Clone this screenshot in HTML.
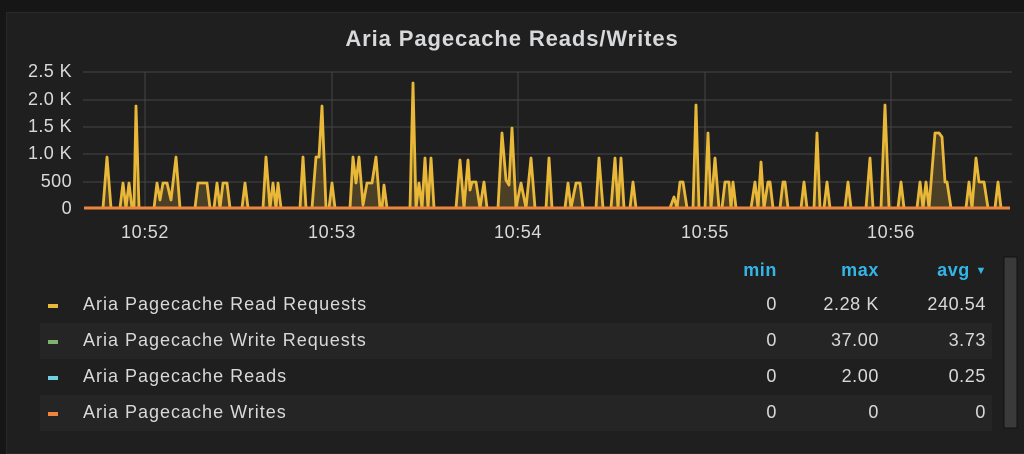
<!DOCTYPE html>
<html><head><meta charset="utf-8"><style>
body{margin:0;width:1024px;height:441px;background:#161616;overflow:hidden;font-family:"Liberation Sans",sans-serif;}
.panel{position:absolute;left:6px;top:12px;width:1030px;height:440px;background:#1f1f20;border:1px solid #292929;}
.t{position:absolute;color:#d8d9da;white-space:nowrap;}
.title{left:0;width:1024px;text-align:center;top:26px;font-size:22px;font-weight:bold;letter-spacing:0.9px;}
.yl{right:952px;font-size:18px;text-align:right;letter-spacing:0.4px;}
.xl{font-size:18px;width:80px;text-align:center;top:222px;letter-spacing:0.6px;}
.row{position:absolute;left:40px;width:952px;height:36px;}
.sw{position:absolute;left:8px;top:17px;width:10px;height:4px;}
.nm{position:absolute;left:43px;top:7px;font-size:18px;color:#d8d9da;letter-spacing:1px;}
.v{position:absolute;top:7px;font-size:18px;color:#d8d9da;text-align:right;width:100px;letter-spacing:0.6px;}
.h{position:absolute;top:260px;font-size:18px;font-weight:bold;color:#33b5e5;text-align:right;width:100px;letter-spacing:0.6px;}
</style></head><body>
<div class="panel"></div>
<div class="t title">Aria Pagecache Reads/Writes</div>
<div class="t yl" style="top:61px">2.5 K</div>
<div class="t yl" style="top:89px">2.0 K</div>
<div class="t yl" style="top:116px">1.5 K</div>
<div class="t yl" style="top:143px">1.0 K</div>
<div class="t yl" style="top:171px">500</div>
<div class="t yl" style="top:198px">0</div>
<div class="t xl" style="left:105px">10:52</div>
<div class="t xl" style="left:292px">10:53</div>
<div class="t xl" style="left:478px">10:54</div>
<div class="t xl" style="left:665px">10:55</div>
<div class="t xl" style="left:851px">10:56</div>
<svg style="position:absolute;left:0;top:0" width="1024" height="441">
<g stroke="#444" stroke-width="1">
<line x1="83" y1="72" x2="1012" y2="72"/><line x1="83" y1="100" x2="1012" y2="100"/><line x1="83" y1="127" x2="1012" y2="127"/><line x1="83" y1="154" x2="1012" y2="154"/><line x1="83" y1="182" x2="1012" y2="182"/>
<line x1="145" y1="72" x2="145" y2="208"/><line x1="332" y1="72" x2="332" y2="208"/><line x1="518" y1="72" x2="518" y2="208"/><line x1="705" y1="72" x2="705" y2="208"/><line x1="891" y1="72" x2="891" y2="208"/>
</g>
<polyline fill="rgba(234,184,57,0.22)" stroke="#eab839" stroke-width="2.8" stroke-linejoin="round" points="84,208 103,208 107,157 111,208 120,208 123,183 126,208 129,183 132,208 134,208 136,106 139,208 154,208 157,183 160,200 163,183 167,183 171,200 176,157 180,208 195,208 198,183 207,183 210,208 214,208 217,183 220,208 223,183 227,183 230,208 242,208 245,183 248,208 263,208 266,157 270,208 273,183 276,208 278,183 281,208 300,208 303,157 306,208 312,208 316,157 319,157 322,106 326,208 329,208 332,183 335,208 350,208 353,157 356,183 359,157 363,205 367,183 372,183 376,157 380,208 382,208 384,185 387,208 410,208 413,83 416,208 419,183 422,208 425,158 428,208 431,158 434,208 456,208 460,160 464,208 468,160 470,190 472,182 476,182 480,208 484,182 487,208 498,208 502,133 506,180 509,185 512,128 516,208 521,183 526,208 531,158 535,208 546,208 549,158 552,208 565,208 568,183 571,208 576,183 580,183 583,208 596,208 599,158 603,208 611,208 615,158 618,208 621,158 624,208 630,208 633,182 636,208 670,208 674,197 677,208 680,182 683,182 687,208 693,208 696,105 699,208 705,208 708,133 711,208 715,158 719,208 722,208 725,182 729,182 731,208 733,182 736,208 751,208 755,182 758,208 761,162 764,208 768,182 770,182 773,208 780,208 783,182 785,182 788,208 801,208 804,182 807,208 814,208 817,133 820,208 824,208 827,182 830,208 845,208 848,182 851,208 866,208 870,158 873,208 881,208 885,105 889,208 898,208 901,182 904,208 917,208 920,182 923,208 926,182 929,208 935,133 939,133 942,137 945,182 947,182 951,208 966,208 969,182 972,208 976,158 979,182 984,182 988,208 995,208 998,182 1001,208 1010,208"/>
<line x1="84" y1="208" x2="1010" y2="208" stroke="#ef843c" stroke-width="3"/>
<rect x="1004" y="257" width="13" height="171" fill="#3a3a3a" stroke="#111" stroke-width="1"/>
</svg>
<div class="h" style="left:677px">min</div>
<div class="h" style="left:779px">max</div>
<div class="h" style="left:887px">avg <span style="font-size:11px;vertical-align:2px">&#9660;</span></div>
<div class="row" style="top:287px"><div class="sw" style="background:#eab839"></div><div class="nm">Aria Pagecache Read Requests</div><div class="v" style="left:637px">0</div><div class="v" style="left:739px">2.28 K</div><div class="v" style="left:846px">240.54</div></div>
<div class="row" style="top:323px;background:#252526"><div class="sw" style="background:#7eb26d"></div><div class="nm">Aria Pagecache Write Requests</div><div class="v" style="left:637px">0</div><div class="v" style="left:739px">37.00</div><div class="v" style="left:846px">3.73</div></div>
<div class="row" style="top:359px"><div class="sw" style="background:#6ed0e0"></div><div class="nm">Aria Pagecache Reads</div><div class="v" style="left:637px">0</div><div class="v" style="left:739px">2.00</div><div class="v" style="left:846px">0.25</div></div>
<div class="row" style="top:395px;background:#252526"><div class="sw" style="background:#ef843c"></div><div class="nm">Aria Pagecache Writes</div><div class="v" style="left:637px">0</div><div class="v" style="left:739px">0</div><div class="v" style="left:846px">0</div></div>
</body></html>
